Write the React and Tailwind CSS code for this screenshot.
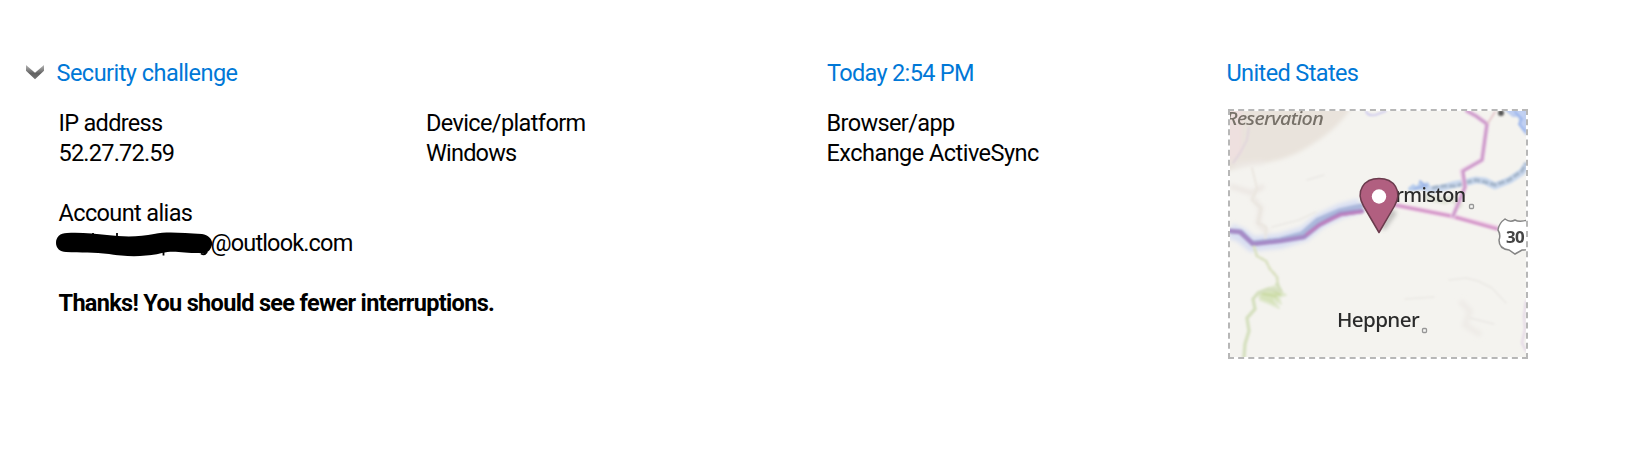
function Chevron() {
  return (
    <svg className="mb-0.5 block h-4 w-5" viewBox="0 0 20 16" aria-hidden="true">
      <defs>
        <linearGradient id="chevron" x1="0" y1="0" x2="0" y2="1">
          <stop offset="0" stopColor="#b5b5b5" />
          <stop offset="0.6" stopColor="#626262" />
          <stop offset="1" stopColor="#757575" />
        </linearGradient>
      </defs>
      <path d="M1 1 L10 8.700 L19 1 V6.800 L10 15.200 L1 6.800 Z" fill="url(#chevron)" />
    </svg>
  );
}

function Field({ label, value, labelClass, valueClass }) {
  return (
    <div>
      <div className={labelClass}>{label}</div>
      <div className={valueClass}>{value}</div>
    </div>
  );
}

function Redaction() {
  return (
    <svg className="-my-1 -mr-[3px] -ml-[3px] block h-8 w-[158px] shrink-0" viewBox="0 0 158 32" role="img" aria-label="Hidden">
      <path
        d="M11 6 C25 5 39 7 51 8 C67 10 84 10 98 7 C112 4 126 6 146 7 C153 8 157 13 156 18 C154 25 150 27 143 26 C127 26 117 23 106 26 C90 30 70 30 53 27 C38 25 25 26 10 25 C4 25 0 21 0 16 C0 10 4 6 11 6Z"
        fill="#000"
      />
      <path d="M37 6v3M61 6v3M107.500 23v5.500" stroke="#000" strokeWidth="1.8" />
      <path d="M145 26.500q3.500 2 6-1.500" stroke="#000" strokeWidth="2" fill="none" />
    </svg>
  );
}

function LocationMap() {
  return (
    <svg className="block h-[246px] w-[296px]" viewBox="0 0 296 246" role="img" aria-label="Sign-in location">
      <defs>
        <filter id="soft" x="-10%" y="-10%" width="120%" height="120%">
          <feGaussianBlur stdDeviation="0.8" />
        </filter>
        <filter id="haze" x="-20%" y="-20%" width="140%" height="140%">
          <feGaussianBlur stdDeviation="2" />
        </filter>
        <filter id="label" x="-10%" y="-10%" width="120%" height="120%">
          <feGaussianBlur stdDeviation="0.4" />
        </filter>
      </defs>
      <rect width="296" height="246" fill="#f4f3ef" />
      <g filter="url(#haze)" fill="none">
        <path d="M-4 -4H122C110 14 96 25 78 36C60 47 43 51 27 53L-4 60Z" fill="#e9e3dc" />
        <path d="M-4 -4H12V42L-4 54Z" fill="#eee0df" />
        <path d="M4 54L34 51M0 75L22 82L34 75M22 86L31 97L28 112L38 122" stroke="#ece7e3" strokeWidth="5" />
        <path d="M0 120L11 124L22 133L50 130L74 123L90 110L111 100L130 95" stroke="#d9dff2" strokeWidth="15" />
        <path d="M230 190L240 200L235 214L251 224" stroke="#eeebe7" strokeWidth="6" />
      </g>
      <g filter="url(#soft)" fill="none" strokeLinejoin="round" strokeLinecap="round">
        <path d="M19 16L17 29L10 42L3 52" stroke="#dfd1dc" strokeWidth="1.5" />
        <path d="M22 57L27 77L22 89L31 97L28 112L36 116L35 132" stroke="#eae6df" strokeWidth="2" />
        <path d="M42 116L69 109L86 101M77 69L94 64M219 169L236 167L248 170L262 177L276 192M175 188L204 186M240 207L264 213" stroke="#eae8e4" strokeWidth="1.4" />
        <path d="M136 0C137 5 144 5 148 3L156 0" stroke="#c9c4ed" strokeWidth="1.600" />
        <path d="M276 -1L283 5L289 5L291 16L296 23V-1Z" fill="#c2d1f3" stroke="#b9caee" strokeWidth="2" />
        <path d="M285 1L292 8L289 13L295 20" stroke="#9ab5ec" strokeWidth="2" />
        <path d="M0 120L11 121L22 132L50 129L72 123L88 109L109 100L131 95" stroke="#abb8db" strokeWidth="5" />
        <path d="M178 77L183 73L187 75L190 69L194 72L198 71L200 75L212 75L205 82L192 79L179 80Z" fill="#b8cded" stroke="none" />
        <path d="M190 70L195 75M184 78L197 74" stroke="#94aee5" strokeWidth="1.500" />
        <path d="M200 79L212 77L222 74L238 71L246 69L255 70L265 75L280 69L292 61L296 55" stroke="#cbd9ee" strokeWidth="7" />
        <path d="M202 77L214 75L226 75L238 71L246 69L255 71L265 74L279 69L292 60L296 52" stroke="#a5b6cb" strokeWidth="3.500" strokeDasharray="7 1.500" strokeLinecap="butt" />
        <path d="M197 86L215 90L223 87L229 94" stroke="#e2e5da" strokeWidth="7" />
        <path d="M0 120L10 121L23 133L50 130L74 126L89 114L110 103L132 100" stroke="#a68ac6" strokeWidth="4.500" />
        <path d="M77 123L91 113L111 104L132 101" stroke="#bf80be" strokeWidth="2.500" />
        <path d="M165 94L180 97L221 105L267 117" stroke="#efcfe6" strokeWidth="5" />
        <path d="M165 94L180 97L221 105L267 118" stroke="#d496c9" strokeWidth="3" />
        <path d="M237 0L246 5L257 13L252 49L232 60L235 76L229 91L223 105" stroke="#ecd3e8" strokeWidth="5" />
        <path d="M237 0L246 5L257 13L252 49L233 60L235 76L229 91L223 105" stroke="#cd99ca" strokeWidth="3" />
        <path d="M258 12L265 1" stroke="#e5c8cc" strokeWidth="2" />
        <circle cx="271" cy="2" r="3" fill="#555" />
        <path d="M24 136L27 145L36 150L40 158L47 166L48 174" stroke="#dce2c5" strokeWidth="3" strokeDasharray="4 2.500" />
        <path d="M28 181L36 178L45 175L50 180L56 184L49 186L51 193L44 189L49 197L38 192L30 189Z" fill="#d7e3bb" stroke="#e2e9d2" strokeWidth="2" />
        <path d="M33 183L46 185M40 178L50 184" stroke="#c8d9a0" strokeWidth="2" />
        <path d="M47 173L51 180L38 178L28 182L23 188L25 198L17 207L19 220L15 233L14 246" stroke="#d6e0c0" strokeWidth="3.500" />
        <path d="M296 190L294 205L295 218L292 232L296 240" stroke="#e3d5e5" strokeWidth="2" />
      </g>
      <g fontFamily="'Noto Sans', 'Open Sans', sans-serif" filter="url(#label)">
        <text x="-4" y="13.500" fontSize="17.500" fontStyle="italic" fontWeight="500" fill="#777169" textLength="97" lengthAdjust="spacingAndGlyphs">Reservation</text>
        <text x="165.500" y="90.500" fontSize="19.500" fontWeight="500" fill="#2c2c2c" textLength="70" lengthAdjust="spacingAndGlyphs">rmiston</text>
        <text x="107" y="216" fontSize="20" fontWeight="500" fill="#2c2c2c" textLength="82" lengthAdjust="spacingAndGlyphs">Heppner</text>
      </g>
      <g fill="#f7f7f5" stroke="#969696" strokeWidth="1.300" filter="url(#label)">
        <rect x="239.500" y="93.500" width="4" height="4" rx="1" />
        <rect x="192.500" y="217.500" width="4" height="4" rx="1" />
      </g>
      <g filter="url(#label)">
        <path d="M275 108Q280 112 285 109Q290 112 300 108L304 113V132Q299 140 292 139L285 143L279 139Q269 138 269 129Q271 124 268 119Q269 112 275 108Z" fill="#fff" stroke="#858585" strokeWidth="1.500" />
        <text x="276" y="132" fontFamily="'Noto Sans', sans-serif" fontSize="15.500" fontWeight="700" fill="#444" textLength="18" lengthAdjust="spacingAndGlyphs">30</text>
      </g>
      <path d="M150 117L161 97L167 102L155 119Z" fill="#777" opacity=".4" filter="url(#haze)" />
      <path d="M149 121.500L133.500 95C125 80 134 67.500 149 67.500C164 67.500 173 80 164.500 95Z" fill="#b15f80" stroke="#6b3b4d" strokeWidth="1.500" strokeLinejoin="round" />
      <circle cx="149" cy="85.500" r="7.200" fill="#fff" />
    </svg>
  );
}

export default function App() {
  return (
    <main className="h-[456px] w-[1638px] bg-white pt-[58px] font-['Roboto',sans-serif] text-[23.5px] leading-[30px] tracking-[-0.62px] text-black">
      <header className="flex text-[#0078d7]">
        <div className="flex w-[827px] items-center pl-[25px]">
          <Chevron />
          <h2 className="ml-[11.5px] tracking-[-0.53px]">Security challenge</h2>
        </div>
        <div className="w-[399.5px] tracking-[-0.67px]">Today 2:54 PM</div>
        <div>United States</div>
      </header>
      <section className="flex">
        <div className="w-[1228px] pt-5 pl-[58.5px]">
          <div className="grid grid-cols-[367.5px_400.5px_1fr]">
            <Field label="IP address" value="52.27.72.59" labelClass="tracking-[-0.69px]" valueClass="tracking-[-0.78px]" />
            <Field label="Device/platform" value="Windows" valueClass="tracking-[-0.8px]" />
            <Field label="Browser/app" value="Exchange ActiveSync" valueClass="tracking-[-0.53px]" />
          </div>
          <div className="mt-[30px]">
            <div>Account alias</div>
            <div className="flex h-[30px] items-center">
              <Redaction />
              <span className="tracking-[-0.85px]">@outlook.com</span>
            </div>
          </div>
          <p className="mt-[30px] font-bold tracking-[-0.68px]">Thanks! You should see fewer interruptions.</p>
        </div>
        <div className="mt-[21px] h-[250px] w-[300px] border-2 border-dashed border-[#b7b7b7]">
          <LocationMap />
        </div>
      </section>
    </main>
  );
}
